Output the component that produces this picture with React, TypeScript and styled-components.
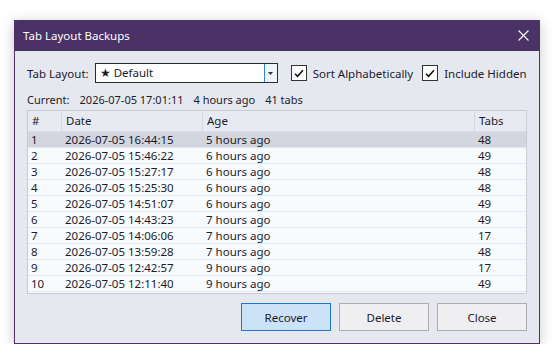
import styled, { createGlobalStyle } from "styled-components";

const GlobalStyle = createGlobalStyle`
  html, body {
    margin: 0;
    padding: 0;
    background: #ffffff;
    font-family: "Noto Sans", "Liberation Sans", sans-serif;
    font-size: 11.5px;
    color: #1c1b2b;
  }
`;

type Backup = { date: string; age: string; tabs: number };

const backups: Backup[] = [
  { date: "2026-07-05 16:44:15", age: "5 hours ago", tabs: 48 },
  { date: "2026-07-05 15:46:22", age: "6 hours ago", tabs: 49 },
  { date: "2026-07-05 15:27:17", age: "6 hours ago", tabs: 48 },
  { date: "2026-07-05 15:25:30", age: "6 hours ago", tabs: 48 },
  { date: "2026-07-05 14:51:07", age: "6 hours ago", tabs: 49 },
  { date: "2026-07-05 14:43:23", age: "7 hours ago", tabs: 49 },
  { date: "2026-07-05 14:06:06", age: "7 hours ago", tabs: 17 },
  { date: "2026-07-05 13:59:28", age: "7 hours ago", tabs: 48 },
  { date: "2026-07-05 12:42:57", age: "9 hours ago", tabs: 17 },
  { date: "2026-07-05 12:11:40", age: "9 hours ago", tabs: 49 },
];

function Check() {
  return (
    <CheckBox>
      <svg width="10" height="9" viewBox="0 0 10 9">
        <path d="M1 4.8 L3.6 7.4 L9 1.2" stroke="#111111" strokeWidth="1.6" fill="none" />
      </svg>
    </CheckBox>
  );
}

export default function App() {
  return (
    <>
      <GlobalStyle />
      <Page>
        <Dialog>
          <TitleBar>
            <span>Tab Layout Backups</span>
            <CloseIcon width="11" height="11" viewBox="0 0 11 11">
              <path d="M0.5 0.5 L10.5 10.5 M10.5 0.5 L0.5 10.5" stroke="#ffffff" strokeWidth="1.1" />
            </CloseIcon>
          </TitleBar>

          <Body>
            <OptionsRow>
              <span>Tab Layout:</span>
              <Combo>
                <ComboText>★ Default</ComboText>
                <ComboButton>
                  <svg width="5" height="3" viewBox="0 0 5 3">
                    <path d="M0 0 H5 L2.5 3 Z" fill="#333333" />
                  </svg>
                </ComboButton>
              </Combo>
              <CheckLabel $gap={13}>
                <Check />
                Sort Alphabetically
              </CheckLabel>
              <CheckLabel $gap={9}>
                <Check />
                Include Hidden
              </CheckLabel>
            </OptionsRow>

            <CurrentRow>
              <span>Current:</span>
              <span>2026-07-05 17:01:11</span>
              <span>4 hours ago</span>
              <span>41 tabs</span>
            </CurrentRow>

            <List>
              <HeaderRow>
                <HeaderCell>#</HeaderCell>
                <HeaderCell>Date</HeaderCell>
                <HeaderCell>Age</HeaderCell>
                <HeaderCell $last>Tabs</HeaderCell>
              </HeaderRow>
              {backups.map((b, i) => (
                <Row key={b.date} $selected={i === 0}>
                  <Cell>{i + 1}</Cell>
                  <Cell>{b.date}</Cell>
                  <Cell>{b.age}</Cell>
                  <Cell>{b.tabs}</Cell>
                </Row>
              ))}
            </List>

            <Buttons>
              <Button $primary>Recover</Button>
              <Button>Delete</Button>
              <Button>Close</Button>
            </Buttons>
          </Body>
        </Dialog>
      </Page>
    </>
  );
}

const Page = styled.div`
  padding: 20px 0 0 14px;
`;

const Dialog = styled.div`
  width: 526px;
  height: 324px;
  box-sizing: border-box;
  border: 1px solid #4a3166;
  border-top: none;
  background: #e6e8f0;
  box-shadow: 0 2px 12px rgba(0, 0, 0, 0.22);
  display: flex;
  flex-direction: column;
`;

const TitleBar = styled.div`
  height: 31px;
  margin: 0 -1px;
  background: #4a3166;
  color: #ffffff;
  display: flex;
  align-items: center;
  justify-content: space-between;
  padding: 0 11px 0 9px;
  box-sizing: border-box;
  flex-shrink: 0;
`;

const CloseIcon = styled.svg`
  display: block;
`;

const Body = styled.div`
  flex: 1;
  padding: 12px 12px 0 12px;
  display: flex;
  flex-direction: column;
`;

const OptionsRow = styled.div`
  display: flex;
  align-items: center;
  height: 20px;
  gap: 6px;
  white-space: nowrap;
`;

const Combo = styled.div`
  width: 183px;
  height: 20px;
  flex-shrink: 0;
  box-sizing: border-box;
  border: 1px solid #2b2b2b;
  background: #ffffff;
  display: flex;
`;

const ComboText = styled.div`
  flex: 1;
  padding-left: 4px;
  line-height: 18px;
`;

const ComboButton = styled.div`
  width: 12px;
  border-left: 1px solid #3c7fd1;
  background: #eef4fb;
  display: flex;
  align-items: center;
  justify-content: center;
`;

const CheckLabel = styled.label<{ $gap: number }>`
  display: flex;
  align-items: center;
  gap: 6px;
  flex-shrink: 0;
  margin-left: ${(p) => p.$gap - 6}px;
`;

const CheckBox = styled.span`
  width: 16px;
  height: 16px;
  flex-shrink: 0;
  box-sizing: border-box;
  border: 1px solid #333333;
  background: #ffffff;
  display: flex;
  align-items: center;
  justify-content: center;
`;

const CurrentRow = styled.div`
  display: flex;
  gap: 10px;
  margin-top: 9px;
  height: 15px;
  line-height: 15px;
  font-size: 11px;
  white-space: nowrap;
`;

const List = styled.div`
  margin-top: 3px;
  height: 184px;
  box-sizing: border-box;
  border: 1px solid #c8cbd6;
  background: #f8fbfe;
`;

const columns = "34px 141px 272px 1fr";

const HeaderRow = styled.div`
  display: grid;
  grid-template-columns: ${columns};
  height: 21px;
  background: #e8eaf1;
  border-bottom: 1px solid #dadde5;
  box-sizing: border-box;
`;

const HeaderCell = styled.div<{ $last?: boolean }>`
  padding-left: 4px;
  line-height: 20px;
  border-right: ${(p) => (p.$last ? "none" : "1px solid #d6d9e2")};
`;

const Row = styled.div<{ $selected?: boolean }>`
  display: grid;
  grid-template-columns: ${columns};
  height: 16px;
  box-sizing: border-box;
  border-bottom: 1px solid #e5e8ee;
  background: ${(p) => (p.$selected ? "#d3d6df" : "transparent")};
`;

const Cell = styled.div`
  padding-left: 3px;
  line-height: 15px;
  white-space: nowrap;
`;

const Buttons = styled.div`
  display: flex;
  justify-content: flex-end;
  gap: 8px;
  margin-top: 9px;
`;

const Button = styled.button<{ $primary?: boolean }>`
  width: 90px;
  height: 28px;
  font-family: inherit;
  font-size: 11.5px;
  color: #1c1b2b;
  background: ${(p) => (p.$primary ? "#cce2f6" : "#efeff2")};
  border: 1px solid ${(p) => (p.$primary ? "#1a78d3" : "#adadad")};
  padding: 0;
`;
